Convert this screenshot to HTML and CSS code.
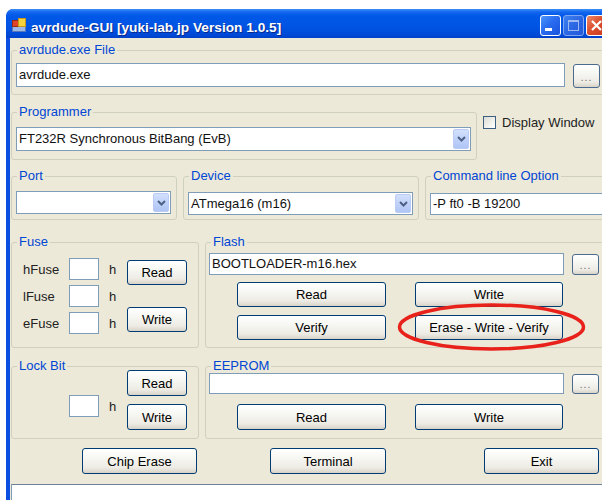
FILE: index.html
```html
<!DOCTYPE html>
<html>
<head>
<meta charset="utf-8">
<title>avrdude-GUI</title>
<link rel="stylesheet" href="styles.css">
</head>
<body>
<div class="window">
  <div class="titlebar">
    <svg class="app-icon" width="14" height="14" viewBox="0 0 14 14">
      <rect x="0.5" y="8.5" width="13" height="5" fill="#9DB7E8" stroke="#5A78B8"/>
      <rect x="0.5" y="2.5" width="6" height="6" fill="#E0452A" stroke="#9C2A14"/>
      <rect x="6.5" y="0.5" width="7" height="8" fill="#F7D23C" stroke="#C99A1A"/>
    </svg>
    <span class="title">avrdude-GUI [yuki-lab.jp Version 1.0.5]</span>
    <div class="caption-buttons">
      <span class="cap cap-min">
        <svg width="19" height="19" viewBox="0 0 19 19"><rect x="4" y="12" width="7" height="3" fill="#fff"/></svg>
      </span>
      <span class="cap cap-max">
        <svg width="19" height="19" viewBox="0 0 19 19"><rect x="4.5" y="4.5" width="10" height="10" fill="none" stroke="#9EB8F0"/><rect x="4" y="4" width="11" height="2" fill="#9EB8F0"/></svg>
      </span>
      <span class="cap cap-close">
        <svg width="19" height="19" viewBox="0 0 19 19"><path d="M5 5 L14 14 M14 5 L5 14" stroke="#fff" stroke-width="2.2" fill="none"/></svg>
      </span>
    </div>
  </div>

  <div class="client">
    <fieldset class="group g-file">
      <legend>avrdude.exe File</legend>
      <div class="body file-body">
        <div class="textbox path-box tall">avrdude.exe</div>
        <button class="btn browse">...</button>
      </div>
    </fieldset>

    <div class="row row-prog">
      <fieldset class="group g-prog">
        <legend>Programmer</legend>
        <div class="body prog-body">
          <div class="combo combo-prog">
            <span class="combo-text">FT232R Synchronous BitBang (EvB)</span>
            <span class="drop"><svg width="9" height="6" viewBox="0 0 9 6"><path d="M1 1 L4.5 4.5 L8 1" fill="none" stroke="#4D6185" stroke-width="2"/></svg></span>
          </div>
        </div>
      </fieldset>
      <label class="check"><span class="check-box"></span>Display Window</label>
    </div>

    <div class="row row-port">
      <fieldset class="group g-port">
        <legend>Port</legend>
        <div class="body port-body">
          <div class="combo combo-port">
            <span class="combo-text"></span>
            <span class="drop"><svg width="9" height="6" viewBox="0 0 9 6"><path d="M1 1 L4.5 4.5 L8 1" fill="none" stroke="#4D6185" stroke-width="2"/></svg></span>
          </div>
        </div>
      </fieldset>
      <fieldset class="group g-device">
        <legend>Device</legend>
        <div class="body device-body">
          <div class="combo combo-device">
            <span class="combo-text">ATmega16 (m16)</span>
            <span class="drop"><svg width="9" height="6" viewBox="0 0 9 6"><path d="M1 1 L4.5 4.5 L8 1" fill="none" stroke="#4D6185" stroke-width="2"/></svg></span>
          </div>
        </div>
      </fieldset>
      <fieldset class="group g-cmd">
        <legend>Command line Option</legend>
        <div class="body cmd-body">
          <div class="textbox cmd-box">-P ft0 -B 19200</div>
        </div>
      </fieldset>
    </div>

    <div class="row row-fuse">
      <fieldset class="group g-fuse">
        <legend>Fuse</legend>
        <div class="body fuse-body">
          <div class="fuse-rows">
            <div class="fuse-row"><span class="fuse-name">hFuse</span><span class="textbox hexbox"></span><span class="unit">h</span></div>
            <div class="fuse-row"><span class="fuse-name">lFuse</span><span class="textbox hexbox"></span><span class="unit">h</span></div>
            <div class="fuse-row"><span class="fuse-name">eFuse</span><span class="textbox hexbox"></span><span class="unit">h</span></div>
          </div>
          <div class="side-buttons fuse-buttons">
            <button class="btn small-btn">Read</button>
            <button class="btn small-btn">Write</button>
          </div>
        </div>
      </fieldset>
      <fieldset class="group g-flash">
        <legend>Flash</legend>
        <div class="body flash-body">
          <div class="file-line">
            <div class="textbox mem-box">BOOTLOADER-m16.hex</div>
            <button class="btn browse">...</button>
          </div>
          <div class="btn-line">
            <button class="btn wide-btn">Read</button>
            <button class="btn wide-btn">Write</button>
          </div>
          <div class="btn-line btn-line-2">
            <button class="btn wide-btn">Verify</button>
            <button class="btn wide-btn">Erase - Write - Verify</button>
          </div>
        </div>
      </fieldset>
    </div>

    <div class="row row-lock">
      <fieldset class="group g-lock">
        <legend>Lock Bit</legend>
        <div class="body lock-body">
          <div class="lock-field"><span class="textbox hexbox"></span><span class="unit">h</span></div>
          <div class="side-buttons lock-buttons">
            <button class="btn small-btn">Read</button>
            <button class="btn small-btn">Write</button>
          </div>
        </div>
      </fieldset>
      <fieldset class="group g-eeprom">
        <legend>EEPROM</legend>
        <div class="body eeprom-body">
          <div class="file-line">
            <div class="textbox mem-box eeprom-box"></div>
            <button class="btn browse browse-short">...</button>
          </div>
          <div class="btn-line eeprom-line">
            <button class="btn wide-btn">Read</button>
            <button class="btn wide-btn">Write</button>
          </div>
        </div>
      </fieldset>
    </div>

    <div class="row row-actions">
      <button class="btn action-btn chip">Chip Erase</button>
      <button class="btn action-btn terminal">Terminal</button>
      <button class="btn action-btn exit">Exit</button>
    </div>

    <div class="log"></div>

    <svg class="mark" width="195" height="53" viewBox="0 0 195 53">
      <ellipse cx="96.5" cy="26" rx="92" ry="22" fill="none" stroke="#E8221B" stroke-width="3.5"/>
    </svg>
  </div>
</div>
</body>
</html>
```

FILE: styles.css
```css
* {
  box-sizing: border-box;
}

html,
body {
  margin: 0;
  padding: 0;
}

body {
  width: 602px;
  height: 500px;
  overflow: hidden;
  background: #ffffff;
  font-family: "Liberation Sans", Arial, sans-serif;
  font-size: 13px;
  color: #111;
}

/* ---------- window frame ---------- */

.window {
  margin: 9px 0 0 6px;
  width: 606px;
  height: 491px;
  background: #0B4FE0;
  border-radius: 7px 7px 0 0;
  display: flex;
  flex-direction: column;
  overflow: hidden;
}

.titlebar {
  flex: none;
  height: 29px;
  display: flex;
  align-items: flex-start;
  padding: 0 5px 0 6px;
  border-radius: 7px 7px 0 0;
  background: linear-gradient(to bottom,
      #3D8FF8 0px, #1466EE 3px, #0058E8 7px, #0054E3 18px, #0049D6 26px, #0040C8 29px);
}

.app-icon {
  flex: none;
  margin-top: 9px;
}

.title {
  margin: 10px 0 0 5px;
  font-size: 13.7px;
  line-height: 17px;
  font-weight: bold;
  color: #fff;
  text-shadow: 1px 1px 0 #0A2A8A;
  white-space: nowrap;
}

.caption-buttons {
  margin: 6px 0 0 auto;
  display: flex;
  gap: 2px;
}

.cap {
  width: 21px;
  height: 21px;
  border: 1px solid #fff;
  border-radius: 3px;
  display: flex;
}

.cap-min {
  background: linear-gradient(135deg, #4C96FA 0%, #2A6CF0 45%, #1A54DC 100%);
}

.cap-max {
  border-color: #7FA6F0;
  background: linear-gradient(135deg, #3F82F0 0%, #2C67E4 50%, #2459D8 100%);
}

.cap-close {
  background: linear-gradient(135deg, #EC8A6C 0%, #DC5130 45%, #C7381A 100%);
}

/* ---------- client area ---------- */

.client {
  position: relative;
  flex: 1;
  min-height: 0;
  overflow: hidden;
  margin: 0 4px;
  padding: 0 2px 0 1px;
  background: #ECE9D8;
  display: flex;
  flex-direction: column;
}

.row {
  display: flex;
  flex: none;
}

.group {
  margin: 0;
  padding: 0;
  min-width: 0;
  border: 1px solid #D0D0BF;
  border-radius: 3px;
}

.group > legend {
  margin-left: 5px;
  padding: 0 2px;
  font-size: 13px;
  line-height: 14px;
  color: #0046D5;
}

/* text boxes, combo boxes */

.textbox {
  display: block;
  height: 22px;
  border: 1px solid #7F9DB9;
  background: #fff;
  padding: 0 2px;
  line-height: 20px;
  white-space: nowrap;
  overflow: hidden;
}

.textbox.tall {
  height: 24px;
  line-height: 22px;
}

.combo {
  display: flex;
  border: 1px solid #7F9DB9;
  background: #fff;
  padding: 1px;
}

.combo-text {
  flex: 1;
  padding-left: 1px;
  line-height: 20px;
  white-space: nowrap;
}

.drop {
  width: 16px;
  display: flex;
  align-items: center;
  justify-content: center;
  border: 1px solid #BACCF6;
  border-radius: 2px;
  background: linear-gradient(to bottom, #D3E0FD 0%, #C0D2FA 50%, #AFC5F5 100%);
}

/* buttons */

.btn {
  margin: 0;
  padding: 0;
  font: inherit;
  color: #000;
  border: 1px solid #003C74;
  border-radius: 3px;
  background: linear-gradient(to bottom, #FFFFFF 0%, #F6F6F2 40%, #EDEBE4 78%, #D8D3C8 100%);
}

.browse {
  width: 27px;
  height: 24px;
  margin: 1px 0 0 8px;
  border-color: #4A6A90;
  font-size: 10px;
  color: #6A6A6A;
  letter-spacing: 1px;
  padding-top: 3px;
}

/* ---------- avrdude.exe File ---------- */

.g-file {
  flex: none;
  margin-top: 5px;
}

.file-body {
  display: flex;
  align-items: flex-start;
  padding: 6px 0 6px 4px;
}

.path-box {
  width: 549px;
}

/* ---------- Programmer ---------- */

.row-prog {
  margin-top: 10px;
  align-items: flex-start;
}

.g-prog {
  width: 466px;
}

.prog-body {
  padding: 8px 0 8px 4px;
}

.combo-prog {
  width: 455px;
  height: 24px;
}

.check {
  margin: 11px 0 0 6px;
  display: flex;
  align-items: center;
  gap: 6px;
  color: #222;
  line-height: 13px;
}

.check-box {
  width: 13px;
  height: 13px;
  border: 1px solid #3C5E80;
  background: linear-gradient(135deg, #DCDCD5 0%, #F2F2EE 60%, #FFFFFF 100%);
}

/* ---------- Port / Device / Command line ---------- */

.row-port {
  margin-top: 9px;
  gap: 6px;
}

.g-port {
  width: 166px;
}

.port-body {
  padding: 8px 0 5px 4px;
}

.combo-port {
  width: 155px;
  height: 23px;
}

.g-device {
  width: 236px;
}

.device-body {
  padding: 9px 0 4px 4px;
}

.combo-device {
  width: 225px;
  height: 23px;
}

.g-cmd {
  flex: 1;
}

.cmd-body {
  padding: 10px 0 4px 4px;
}

.cmd-box {
  height: 22px;
}

/* ---------- Fuse / Flash ---------- */

.row-fuse {
  margin-top: 15px;
  gap: 6px;
}

.g-fuse {
  width: 188px;
}

.fuse-body {
  display: flex;
  align-items: flex-start;
  padding: 9px 0 13px 11px;
}

.fuse-rows {
  display: flex;
  flex-direction: column;
  gap: 5px;
}

.fuse-row {
  display: flex;
  align-items: center;
  height: 22px;
  color: #222;
}

.fuse-name {
  width: 46px;
}

.hexbox {
  width: 30px;
  height: 22px;
}

.unit {
  width: 18px;
  margin-left: 10px;
  color: #222;
}

.side-buttons {
  display: flex;
  flex-direction: column;
}

.small-btn {
  width: 60px;
  height: 25px;
}

.fuse-buttons {
  margin-top: 2px;
  gap: 22px;
}

.g-flash {
  flex: 1;
}

.flash-body {
  padding: 4px 0 7px 3px;
}

.file-line {
  display: flex;
  align-items: flex-start;
}

.mem-box {
  width: 355px;
  height: 22px;
}

.flash-body .browse {
  height: 21px;
  padding-top: 2px;
}

.btn-line {
  display: flex;
  margin-top: 7px;
}

.btn-line-2 {
  margin-top: 8px;
}

.wide-btn {
  height: 25px;
  width: 149px;
  margin-left: 28px;
}

.wide-btn + .wide-btn {
  width: 148px;
  margin-left: 29px;
}

/* ---------- Lock Bit / EEPROM ---------- */

.row-lock {
  margin-top: 11px;
  gap: 6px;
}

.g-lock {
  width: 188px;
}

.lock-body {
  display: flex;
  align-items: flex-start;
  padding: 0 0 8px 57px;
}

.lock-field {
  display: flex;
  align-items: center;
  margin-top: 22px;
}

.lock-buttons {
  margin-top: -3px;
  gap: 8px;
}

.lock-buttons .small-btn {
  height: 26px;
}

.g-eeprom {
  flex: 1;
}

.eeprom-body {
  padding: 0 0 8px 3px;
}

.eeprom-box {
  height: 21px;
}

.browse-short {
  height: 20px;
  padding-top: 1px;
}

.eeprom-line {
  margin-top: 10px;
}

.eeprom-line .wide-btn {
  height: 26px;
}

/* ---------- bottom actions ---------- */

.row-actions {
  margin-top: 9px;
}

.action-btn {
  height: 26px;
  width: 115px;
}

.chip {
  margin-left: 71px;
}

.terminal {
  width: 116px;
  margin-left: 73px;
}

.exit {
  margin-left: 98px;
}

.log {
  flex: none;
  margin-top: 10px;
  height: 40px;
  border: 1px solid #7F9DB9;
  border-top-color: #6F8398;
  background: #fff;
}

/* red highlight drawn over the Flash buttons */
.mark {
  position: absolute;
  left: 385px;
  top: 263px;
}
```
